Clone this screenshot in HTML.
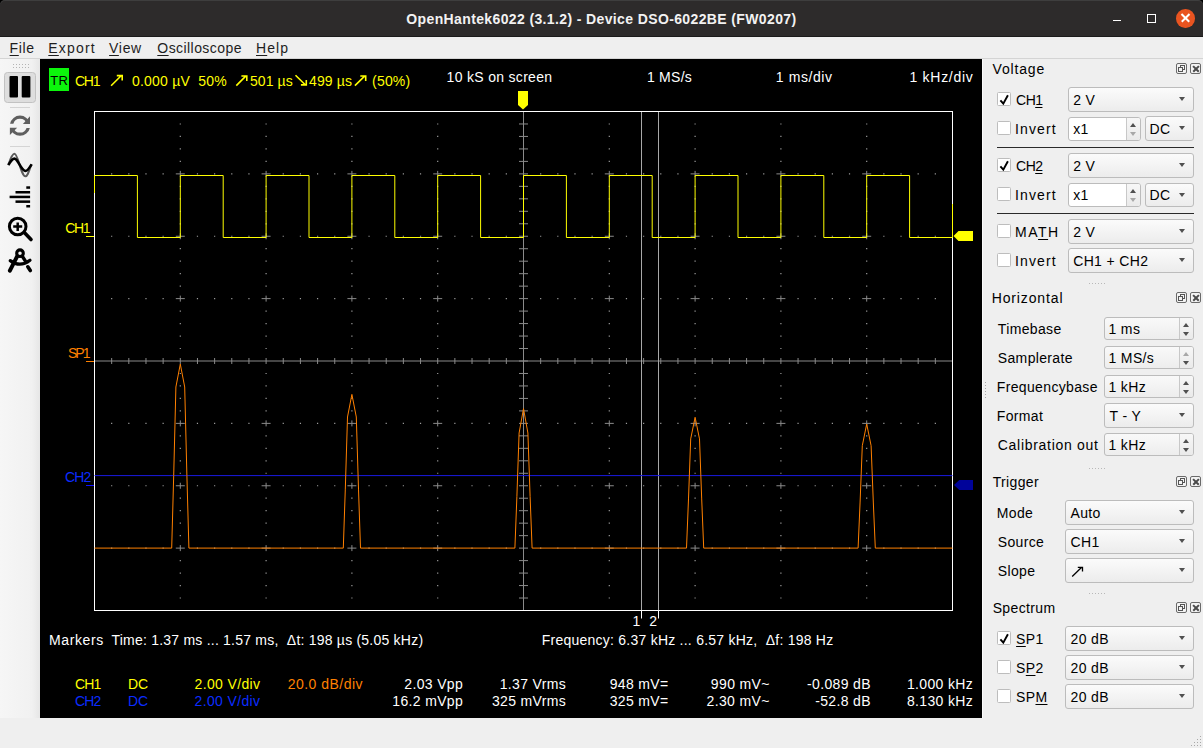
<!DOCTYPE html>
<html><head><meta charset="utf-8"><style>
*{box-sizing:border-box}
html,body{margin:0;padding:0}
body{width:1203px;height:748px;position:relative;overflow:hidden;background:linear-gradient(#000 0 8px,#efefef 8px);font-family:"Liberation Sans",sans-serif}
.t{position:absolute;white-space:pre;}
.t u{text-decoration:underline;text-underline-offset:2px;text-decoration-thickness:1px}
#title{position:absolute;left:0;top:0;width:1203px;height:37px;background:#2d2b2b;border-bottom:1px solid #1b1b1b;border-radius:5px 5px 0 0;box-shadow:inset 0 1px 0 #3e3e3e}
#menu{position:absolute;left:0;top:37px;width:1203px;height:22px;background:#efefef;border-bottom:1px solid #d4d4d4}
#tool{position:absolute;left:0;top:59px;width:40px;height:659px;background:linear-gradient(90deg,#f6f6f6,#f1f1f1 80%,#e6e6e6)}
#scope{position:absolute;left:40px;top:59px;width:942px;height:659px;background:#000}
.scope{position:absolute;left:40px;top:59px}
.icons{position:absolute;left:0;top:59px}
#panel{position:absolute;left:982px;top:59px;width:221px;height:659px;background:#efefef}
.cb{position:absolute;border:1px solid #bcbcbc;border-radius:3px;background:linear-gradient(#fbfbfb,#ececec)}
.arr{position:absolute;width:0;height:0;border-left:3.5px solid transparent;border-right:3.5px solid transparent;border-top:4.5px solid #505050}
.sp{position:absolute;border:1px solid #bcbcbc;border-radius:3px;background:linear-gradient(#f9f9f9,#ededed)}
.sp.white{background:#fff}
.sp .btn{position:absolute;top:0;width:14px;border-left:1px solid #c8c8c8;background:linear-gradient(#f7f7f7,#eaeaea);border-radius:0 2px 2px 0}
.sp .btn i{position:absolute;left:3px;width:0;height:0;border-left:3.5px solid transparent;border-right:3.5px solid transparent}
.sp .btn i.up{border-bottom:4px solid #505050}
.sp .btn i.dn{border-top:4px solid #505050}
.sp .btn i.dis.up{border-bottom-color:#a8a8a8}
.sp .btn i.dis.dn{border-top-color:#a8a8a8}
.ck{position:absolute;width:14px;height:14px;border:1px solid #bdbdbd;border-radius:1.5px;background:#fff}
.ck b{position:absolute;left:1px;top:-3px;font-size:14px;font-weight:bold;color:#000;line-height:18px}
.hl{position:absolute;left:997px;width:197px;height:1px;background:#2a2a2a}
.db{position:absolute;width:11px;height:11px;border:1px solid #6a6a6a;border-radius:2px;background:#f3f3f3}
.db i{position:absolute}
.db .fl1{left:3px;top:1px;width:5px;height:5px;border:1px solid #555}
.db .fl2{left:1px;top:3px;width:5px;height:5px;border:1px solid #555;background:#f3f3f3}
.db .x1,.db .x2{left:0.5px;top:3.8px;width:8px;height:1.8px;background:#4a4a4a;transform:rotate(45deg)}
.db .x2{transform:rotate(-45deg)}
.grip{position:absolute;height:1px;background:repeating-linear-gradient(90deg,#b8b8b8 0 1px,transparent 1px 3px)}
#winbtn .min{position:absolute;left:1113px;top:20px;width:8px;height:1px;background:#fff}
#winbtn .max{position:absolute;left:1147px;top:14px;width:8.5px;height:8.5px;border:1px solid #fff}
#winbtn .cls{position:absolute;left:1176px;top:9px;width:18.5px;height:18.5px;border-radius:50%;background:#e95420}
#winbtn .cls i{position:absolute;left:3.7px;top:8.4px;width:11px;height:1.6px;background:#fff;transform:rotate(45deg)}
#winbtn .cls i+i{transform:rotate(-45deg)}
</style></head><body>
<div id="title"></div>
<div id="winbtn"><div class="min"></div><div class="max"></div><div class="cls"><i></i><i></i></div></div>
<div id="menu"></div>
<div id="tool"></div>
<svg class="icons" width="40" height="659" viewBox="0 59 40 659">
<g fill="#b4b4b4"><rect x="13" y="64" width="1" height="1"/><rect x="16" y="64" width="1" height="1"/><rect x="19" y="64" width="1" height="1"/><rect x="22" y="64" width="1" height="1"/><rect x="25" y="64" width="1" height="1"/><rect x="28" y="64" width="1" height="1"/>
<rect x="13" y="67" width="1" height="1"/><rect x="16" y="67" width="1" height="1"/><rect x="19" y="67" width="1" height="1"/><rect x="22" y="67" width="1" height="1"/><rect x="25" y="67" width="1" height="1"/><rect x="28" y="67" width="1" height="1"/></g>
<rect x="4.5" y="72.5" width="31" height="30" rx="3" fill="#dedede" stroke="#c2c2c2"/>
<rect x="9.5" y="76" width="8.5" height="21.5" rx="1" fill="#000"/>
<rect x="21.7" y="76" width="8.7" height="21.5" rx="1" fill="#000"/>
<rect x="10" y="107" width="20" height="1" fill="#d4d4d4"/>
<g fill="#5f5f5f">
<path d="M10.08 123.8A10.1 10.1 0 0 1 29.92 123.8L26.63 123.8A6.9 6.9 0 0 0 13.37 123.8Z"/>
<path d="M22.9 123.9L30 123.9L30 116.2Z"/>
<path d="M29.86 127.9A10.1 10.1 0 0 1 10.14 127.9L13.46 127.9A6.9 6.9 0 0 0 26.54 127.9Z"/>
<path d="M17.1 127.8L9.9 127.8L9.9 134.9Z"/>
</g>
<rect x="10" y="146" width="20" height="1" fill="#d4d4d4"/>
<path d="M8.5 164.5C11 157 12.5 153.8 14.5 153.8C18 153.8 21 176.3 25.5 176.3C27.5 176.3 29 171 31.5 164" fill="none" stroke="#5a5a5a" stroke-width="2.1"/>
<path d="M8.3 165.2C11 160.5 12.5 158.6 14.5 158.6C18 158.6 21 171 25.5 171C27.5 171 29 168.5 31.6 164.4" fill="none" stroke="#000" stroke-width="2.6"/>
<g fill="#000"><rect x="26.3" y="186.3" width="3.8" height="2.5"/><rect x="15.5" y="191" width="14.6" height="2.5"/><rect x="9.6" y="195.7" width="20.5" height="2.5"/><rect x="15.5" y="200.4" width="14.6" height="2.5"/><rect x="26.3" y="205" width="3.8" height="2.5"/></g>
<circle cx="17.7" cy="226.5" r="8.3" fill="none" stroke="#000" stroke-width="3"/>
<path d="M13.2 226.6H22.2M17.7 222.4V231" stroke="#000" stroke-width="2.5"/>
<path d="M24.3 232.6L31 239.5" stroke="#000" stroke-width="3.6" stroke-linecap="round"/>
<circle cx="20" cy="253.2" r="3.3" fill="none" stroke="#000" stroke-width="3.1"/>
<path d="M17 256.6L9.9 270.6" stroke="#000" stroke-width="4" stroke-linecap="round"/>
<path d="M22.4 256.4L25.4 261.2" stroke="#000" stroke-width="3.4" stroke-linecap="round"/>
<path d="M27.8 266.8L30.3 270.6" stroke="#000" stroke-width="3.6" stroke-linecap="round"/>
<path d="M10.2 260.6Q20 268 30 260.3" fill="none" stroke="#000" stroke-width="3.2" stroke-linecap="round"/>
</svg>
<div id="scope"></div>
<svg class="scope" width="942" height="659" viewBox="40 59 942 659"><path d="M179.70 123.38h1.2v1.2h-1.2zM179.70 135.85h1.2v1.2h-1.2zM179.70 148.33h1.2v1.2h-1.2zM179.70 160.80h1.2v1.2h-1.2zM179.70 185.75h1.2v1.2h-1.2zM179.70 198.22h1.2v1.2h-1.2zM179.70 210.70h1.2v1.2h-1.2zM179.70 223.18h1.2v1.2h-1.2zM179.70 248.12h1.2v1.2h-1.2zM179.70 260.60h1.2v1.2h-1.2zM179.70 273.07h1.2v1.2h-1.2zM179.70 285.55h1.2v1.2h-1.2zM179.70 310.50h1.2v1.2h-1.2zM179.70 322.97h1.2v1.2h-1.2zM179.70 335.45h1.2v1.2h-1.2zM179.70 347.92h1.2v1.2h-1.2zM179.70 372.88h1.2v1.2h-1.2zM179.70 385.35h1.2v1.2h-1.2zM179.70 397.82h1.2v1.2h-1.2zM179.70 410.30h1.2v1.2h-1.2zM179.70 435.25h1.2v1.2h-1.2zM179.70 447.72h1.2v1.2h-1.2zM179.70 460.20h1.2v1.2h-1.2zM179.70 472.67h1.2v1.2h-1.2zM179.70 497.62h1.2v1.2h-1.2zM179.70 510.10h1.2v1.2h-1.2zM179.70 522.57h1.2v1.2h-1.2zM179.70 535.05h1.2v1.2h-1.2zM179.70 560.00h1.2v1.2h-1.2zM179.70 572.48h1.2v1.2h-1.2zM179.70 584.95h1.2v1.2h-1.2zM179.70 597.42h1.2v1.2h-1.2zM265.50 123.38h1.2v1.2h-1.2zM265.50 135.85h1.2v1.2h-1.2zM265.50 148.33h1.2v1.2h-1.2zM265.50 160.80h1.2v1.2h-1.2zM265.50 185.75h1.2v1.2h-1.2zM265.50 198.22h1.2v1.2h-1.2zM265.50 210.70h1.2v1.2h-1.2zM265.50 223.18h1.2v1.2h-1.2zM265.50 248.12h1.2v1.2h-1.2zM265.50 260.60h1.2v1.2h-1.2zM265.50 273.07h1.2v1.2h-1.2zM265.50 285.55h1.2v1.2h-1.2zM265.50 310.50h1.2v1.2h-1.2zM265.50 322.97h1.2v1.2h-1.2zM265.50 335.45h1.2v1.2h-1.2zM265.50 347.92h1.2v1.2h-1.2zM265.50 372.88h1.2v1.2h-1.2zM265.50 385.35h1.2v1.2h-1.2zM265.50 397.82h1.2v1.2h-1.2zM265.50 410.30h1.2v1.2h-1.2zM265.50 435.25h1.2v1.2h-1.2zM265.50 447.72h1.2v1.2h-1.2zM265.50 460.20h1.2v1.2h-1.2zM265.50 472.67h1.2v1.2h-1.2zM265.50 497.62h1.2v1.2h-1.2zM265.50 510.10h1.2v1.2h-1.2zM265.50 522.57h1.2v1.2h-1.2zM265.50 535.05h1.2v1.2h-1.2zM265.50 560.00h1.2v1.2h-1.2zM265.50 572.48h1.2v1.2h-1.2zM265.50 584.95h1.2v1.2h-1.2zM265.50 597.42h1.2v1.2h-1.2zM351.30 123.38h1.2v1.2h-1.2zM351.30 135.85h1.2v1.2h-1.2zM351.30 148.33h1.2v1.2h-1.2zM351.30 160.80h1.2v1.2h-1.2zM351.30 185.75h1.2v1.2h-1.2zM351.30 198.22h1.2v1.2h-1.2zM351.30 210.70h1.2v1.2h-1.2zM351.30 223.18h1.2v1.2h-1.2zM351.30 248.12h1.2v1.2h-1.2zM351.30 260.60h1.2v1.2h-1.2zM351.30 273.07h1.2v1.2h-1.2zM351.30 285.55h1.2v1.2h-1.2zM351.30 310.50h1.2v1.2h-1.2zM351.30 322.97h1.2v1.2h-1.2zM351.30 335.45h1.2v1.2h-1.2zM351.30 347.92h1.2v1.2h-1.2zM351.30 372.88h1.2v1.2h-1.2zM351.30 385.35h1.2v1.2h-1.2zM351.30 397.82h1.2v1.2h-1.2zM351.30 410.30h1.2v1.2h-1.2zM351.30 435.25h1.2v1.2h-1.2zM351.30 447.72h1.2v1.2h-1.2zM351.30 460.20h1.2v1.2h-1.2zM351.30 472.67h1.2v1.2h-1.2zM351.30 497.62h1.2v1.2h-1.2zM351.30 510.10h1.2v1.2h-1.2zM351.30 522.57h1.2v1.2h-1.2zM351.30 535.05h1.2v1.2h-1.2zM351.30 560.00h1.2v1.2h-1.2zM351.30 572.48h1.2v1.2h-1.2zM351.30 584.95h1.2v1.2h-1.2zM351.30 597.42h1.2v1.2h-1.2zM437.10 123.38h1.2v1.2h-1.2zM437.10 135.85h1.2v1.2h-1.2zM437.10 148.33h1.2v1.2h-1.2zM437.10 160.80h1.2v1.2h-1.2zM437.10 185.75h1.2v1.2h-1.2zM437.10 198.22h1.2v1.2h-1.2zM437.10 210.70h1.2v1.2h-1.2zM437.10 223.18h1.2v1.2h-1.2zM437.10 248.12h1.2v1.2h-1.2zM437.10 260.60h1.2v1.2h-1.2zM437.10 273.07h1.2v1.2h-1.2zM437.10 285.55h1.2v1.2h-1.2zM437.10 310.50h1.2v1.2h-1.2zM437.10 322.97h1.2v1.2h-1.2zM437.10 335.45h1.2v1.2h-1.2zM437.10 347.92h1.2v1.2h-1.2zM437.10 372.88h1.2v1.2h-1.2zM437.10 385.35h1.2v1.2h-1.2zM437.10 397.82h1.2v1.2h-1.2zM437.10 410.30h1.2v1.2h-1.2zM437.10 435.25h1.2v1.2h-1.2zM437.10 447.72h1.2v1.2h-1.2zM437.10 460.20h1.2v1.2h-1.2zM437.10 472.67h1.2v1.2h-1.2zM437.10 497.62h1.2v1.2h-1.2zM437.10 510.10h1.2v1.2h-1.2zM437.10 522.57h1.2v1.2h-1.2zM437.10 535.05h1.2v1.2h-1.2zM437.10 560.00h1.2v1.2h-1.2zM437.10 572.48h1.2v1.2h-1.2zM437.10 584.95h1.2v1.2h-1.2zM437.10 597.42h1.2v1.2h-1.2zM608.70 123.38h1.2v1.2h-1.2zM608.70 135.85h1.2v1.2h-1.2zM608.70 148.33h1.2v1.2h-1.2zM608.70 160.80h1.2v1.2h-1.2zM608.70 185.75h1.2v1.2h-1.2zM608.70 198.22h1.2v1.2h-1.2zM608.70 210.70h1.2v1.2h-1.2zM608.70 223.18h1.2v1.2h-1.2zM608.70 248.12h1.2v1.2h-1.2zM608.70 260.60h1.2v1.2h-1.2zM608.70 273.07h1.2v1.2h-1.2zM608.70 285.55h1.2v1.2h-1.2zM608.70 310.50h1.2v1.2h-1.2zM608.70 322.97h1.2v1.2h-1.2zM608.70 335.45h1.2v1.2h-1.2zM608.70 347.92h1.2v1.2h-1.2zM608.70 372.88h1.2v1.2h-1.2zM608.70 385.35h1.2v1.2h-1.2zM608.70 397.82h1.2v1.2h-1.2zM608.70 410.30h1.2v1.2h-1.2zM608.70 435.25h1.2v1.2h-1.2zM608.70 447.72h1.2v1.2h-1.2zM608.70 460.20h1.2v1.2h-1.2zM608.70 472.67h1.2v1.2h-1.2zM608.70 497.62h1.2v1.2h-1.2zM608.70 510.10h1.2v1.2h-1.2zM608.70 522.57h1.2v1.2h-1.2zM608.70 535.05h1.2v1.2h-1.2zM608.70 560.00h1.2v1.2h-1.2zM608.70 572.48h1.2v1.2h-1.2zM608.70 584.95h1.2v1.2h-1.2zM608.70 597.42h1.2v1.2h-1.2zM694.50 123.38h1.2v1.2h-1.2zM694.50 135.85h1.2v1.2h-1.2zM694.50 148.33h1.2v1.2h-1.2zM694.50 160.80h1.2v1.2h-1.2zM694.50 185.75h1.2v1.2h-1.2zM694.50 198.22h1.2v1.2h-1.2zM694.50 210.70h1.2v1.2h-1.2zM694.50 223.18h1.2v1.2h-1.2zM694.50 248.12h1.2v1.2h-1.2zM694.50 260.60h1.2v1.2h-1.2zM694.50 273.07h1.2v1.2h-1.2zM694.50 285.55h1.2v1.2h-1.2zM694.50 310.50h1.2v1.2h-1.2zM694.50 322.97h1.2v1.2h-1.2zM694.50 335.45h1.2v1.2h-1.2zM694.50 347.92h1.2v1.2h-1.2zM694.50 372.88h1.2v1.2h-1.2zM694.50 385.35h1.2v1.2h-1.2zM694.50 397.82h1.2v1.2h-1.2zM694.50 410.30h1.2v1.2h-1.2zM694.50 435.25h1.2v1.2h-1.2zM694.50 447.72h1.2v1.2h-1.2zM694.50 460.20h1.2v1.2h-1.2zM694.50 472.67h1.2v1.2h-1.2zM694.50 497.62h1.2v1.2h-1.2zM694.50 510.10h1.2v1.2h-1.2zM694.50 522.57h1.2v1.2h-1.2zM694.50 535.05h1.2v1.2h-1.2zM694.50 560.00h1.2v1.2h-1.2zM694.50 572.48h1.2v1.2h-1.2zM694.50 584.95h1.2v1.2h-1.2zM694.50 597.42h1.2v1.2h-1.2zM780.30 123.38h1.2v1.2h-1.2zM780.30 135.85h1.2v1.2h-1.2zM780.30 148.33h1.2v1.2h-1.2zM780.30 160.80h1.2v1.2h-1.2zM780.30 185.75h1.2v1.2h-1.2zM780.30 198.22h1.2v1.2h-1.2zM780.30 210.70h1.2v1.2h-1.2zM780.30 223.18h1.2v1.2h-1.2zM780.30 248.12h1.2v1.2h-1.2zM780.30 260.60h1.2v1.2h-1.2zM780.30 273.07h1.2v1.2h-1.2zM780.30 285.55h1.2v1.2h-1.2zM780.30 310.50h1.2v1.2h-1.2zM780.30 322.97h1.2v1.2h-1.2zM780.30 335.45h1.2v1.2h-1.2zM780.30 347.92h1.2v1.2h-1.2zM780.30 372.88h1.2v1.2h-1.2zM780.30 385.35h1.2v1.2h-1.2zM780.30 397.82h1.2v1.2h-1.2zM780.30 410.30h1.2v1.2h-1.2zM780.30 435.25h1.2v1.2h-1.2zM780.30 447.72h1.2v1.2h-1.2zM780.30 460.20h1.2v1.2h-1.2zM780.30 472.67h1.2v1.2h-1.2zM780.30 497.62h1.2v1.2h-1.2zM780.30 510.10h1.2v1.2h-1.2zM780.30 522.57h1.2v1.2h-1.2zM780.30 535.05h1.2v1.2h-1.2zM780.30 560.00h1.2v1.2h-1.2zM780.30 572.48h1.2v1.2h-1.2zM780.30 584.95h1.2v1.2h-1.2zM780.30 597.42h1.2v1.2h-1.2zM866.10 123.38h1.2v1.2h-1.2zM866.10 135.85h1.2v1.2h-1.2zM866.10 148.33h1.2v1.2h-1.2zM866.10 160.80h1.2v1.2h-1.2zM866.10 185.75h1.2v1.2h-1.2zM866.10 198.22h1.2v1.2h-1.2zM866.10 210.70h1.2v1.2h-1.2zM866.10 223.18h1.2v1.2h-1.2zM866.10 248.12h1.2v1.2h-1.2zM866.10 260.60h1.2v1.2h-1.2zM866.10 273.07h1.2v1.2h-1.2zM866.10 285.55h1.2v1.2h-1.2zM866.10 310.50h1.2v1.2h-1.2zM866.10 322.97h1.2v1.2h-1.2zM866.10 335.45h1.2v1.2h-1.2zM866.10 347.92h1.2v1.2h-1.2zM866.10 372.88h1.2v1.2h-1.2zM866.10 385.35h1.2v1.2h-1.2zM866.10 397.82h1.2v1.2h-1.2zM866.10 410.30h1.2v1.2h-1.2zM866.10 435.25h1.2v1.2h-1.2zM866.10 447.72h1.2v1.2h-1.2zM866.10 460.20h1.2v1.2h-1.2zM866.10 472.67h1.2v1.2h-1.2zM866.10 497.62h1.2v1.2h-1.2zM866.10 510.10h1.2v1.2h-1.2zM866.10 522.57h1.2v1.2h-1.2zM866.10 535.05h1.2v1.2h-1.2zM866.10 560.00h1.2v1.2h-1.2zM866.10 572.48h1.2v1.2h-1.2zM866.10 584.95h1.2v1.2h-1.2zM866.10 597.42h1.2v1.2h-1.2zM111.06 173.28h1.2v1.2h-1.2zM128.22 173.28h1.2v1.2h-1.2zM145.38 173.28h1.2v1.2h-1.2zM162.54 173.28h1.2v1.2h-1.2zM196.86 173.28h1.2v1.2h-1.2zM214.02 173.28h1.2v1.2h-1.2zM231.18 173.28h1.2v1.2h-1.2zM248.34 173.28h1.2v1.2h-1.2zM282.66 173.28h1.2v1.2h-1.2zM299.82 173.28h1.2v1.2h-1.2zM316.98 173.28h1.2v1.2h-1.2zM334.14 173.28h1.2v1.2h-1.2zM368.46 173.28h1.2v1.2h-1.2zM385.62 173.28h1.2v1.2h-1.2zM402.78 173.28h1.2v1.2h-1.2zM419.94 173.28h1.2v1.2h-1.2zM454.26 173.28h1.2v1.2h-1.2zM471.42 173.28h1.2v1.2h-1.2zM488.58 173.28h1.2v1.2h-1.2zM505.74 173.28h1.2v1.2h-1.2zM540.06 173.28h1.2v1.2h-1.2zM557.22 173.28h1.2v1.2h-1.2zM574.38 173.28h1.2v1.2h-1.2zM591.54 173.28h1.2v1.2h-1.2zM625.86 173.28h1.2v1.2h-1.2zM643.02 173.28h1.2v1.2h-1.2zM660.18 173.28h1.2v1.2h-1.2zM677.34 173.28h1.2v1.2h-1.2zM711.66 173.28h1.2v1.2h-1.2zM728.82 173.28h1.2v1.2h-1.2zM745.98 173.28h1.2v1.2h-1.2zM763.14 173.28h1.2v1.2h-1.2zM797.46 173.28h1.2v1.2h-1.2zM814.62 173.28h1.2v1.2h-1.2zM831.78 173.28h1.2v1.2h-1.2zM848.94 173.28h1.2v1.2h-1.2zM883.26 173.28h1.2v1.2h-1.2zM900.42 173.28h1.2v1.2h-1.2zM917.58 173.28h1.2v1.2h-1.2zM934.74 173.28h1.2v1.2h-1.2zM111.06 235.65h1.2v1.2h-1.2zM128.22 235.65h1.2v1.2h-1.2zM145.38 235.65h1.2v1.2h-1.2zM162.54 235.65h1.2v1.2h-1.2zM196.86 235.65h1.2v1.2h-1.2zM214.02 235.65h1.2v1.2h-1.2zM231.18 235.65h1.2v1.2h-1.2zM248.34 235.65h1.2v1.2h-1.2zM282.66 235.65h1.2v1.2h-1.2zM299.82 235.65h1.2v1.2h-1.2zM316.98 235.65h1.2v1.2h-1.2zM334.14 235.65h1.2v1.2h-1.2zM368.46 235.65h1.2v1.2h-1.2zM385.62 235.65h1.2v1.2h-1.2zM402.78 235.65h1.2v1.2h-1.2zM419.94 235.65h1.2v1.2h-1.2zM454.26 235.65h1.2v1.2h-1.2zM471.42 235.65h1.2v1.2h-1.2zM488.58 235.65h1.2v1.2h-1.2zM505.74 235.65h1.2v1.2h-1.2zM540.06 235.65h1.2v1.2h-1.2zM557.22 235.65h1.2v1.2h-1.2zM574.38 235.65h1.2v1.2h-1.2zM591.54 235.65h1.2v1.2h-1.2zM625.86 235.65h1.2v1.2h-1.2zM643.02 235.65h1.2v1.2h-1.2zM660.18 235.65h1.2v1.2h-1.2zM677.34 235.65h1.2v1.2h-1.2zM711.66 235.65h1.2v1.2h-1.2zM728.82 235.65h1.2v1.2h-1.2zM745.98 235.65h1.2v1.2h-1.2zM763.14 235.65h1.2v1.2h-1.2zM797.46 235.65h1.2v1.2h-1.2zM814.62 235.65h1.2v1.2h-1.2zM831.78 235.65h1.2v1.2h-1.2zM848.94 235.65h1.2v1.2h-1.2zM883.26 235.65h1.2v1.2h-1.2zM900.42 235.65h1.2v1.2h-1.2zM917.58 235.65h1.2v1.2h-1.2zM934.74 235.65h1.2v1.2h-1.2zM111.06 298.02h1.2v1.2h-1.2zM128.22 298.02h1.2v1.2h-1.2zM145.38 298.02h1.2v1.2h-1.2zM162.54 298.02h1.2v1.2h-1.2zM196.86 298.02h1.2v1.2h-1.2zM214.02 298.02h1.2v1.2h-1.2zM231.18 298.02h1.2v1.2h-1.2zM248.34 298.02h1.2v1.2h-1.2zM282.66 298.02h1.2v1.2h-1.2zM299.82 298.02h1.2v1.2h-1.2zM316.98 298.02h1.2v1.2h-1.2zM334.14 298.02h1.2v1.2h-1.2zM368.46 298.02h1.2v1.2h-1.2zM385.62 298.02h1.2v1.2h-1.2zM402.78 298.02h1.2v1.2h-1.2zM419.94 298.02h1.2v1.2h-1.2zM454.26 298.02h1.2v1.2h-1.2zM471.42 298.02h1.2v1.2h-1.2zM488.58 298.02h1.2v1.2h-1.2zM505.74 298.02h1.2v1.2h-1.2zM540.06 298.02h1.2v1.2h-1.2zM557.22 298.02h1.2v1.2h-1.2zM574.38 298.02h1.2v1.2h-1.2zM591.54 298.02h1.2v1.2h-1.2zM625.86 298.02h1.2v1.2h-1.2zM643.02 298.02h1.2v1.2h-1.2zM660.18 298.02h1.2v1.2h-1.2zM677.34 298.02h1.2v1.2h-1.2zM711.66 298.02h1.2v1.2h-1.2zM728.82 298.02h1.2v1.2h-1.2zM745.98 298.02h1.2v1.2h-1.2zM763.14 298.02h1.2v1.2h-1.2zM797.46 298.02h1.2v1.2h-1.2zM814.62 298.02h1.2v1.2h-1.2zM831.78 298.02h1.2v1.2h-1.2zM848.94 298.02h1.2v1.2h-1.2zM883.26 298.02h1.2v1.2h-1.2zM900.42 298.02h1.2v1.2h-1.2zM917.58 298.02h1.2v1.2h-1.2zM934.74 298.02h1.2v1.2h-1.2zM111.06 422.77h1.2v1.2h-1.2zM128.22 422.77h1.2v1.2h-1.2zM145.38 422.77h1.2v1.2h-1.2zM162.54 422.77h1.2v1.2h-1.2zM196.86 422.77h1.2v1.2h-1.2zM214.02 422.77h1.2v1.2h-1.2zM231.18 422.77h1.2v1.2h-1.2zM248.34 422.77h1.2v1.2h-1.2zM282.66 422.77h1.2v1.2h-1.2zM299.82 422.77h1.2v1.2h-1.2zM316.98 422.77h1.2v1.2h-1.2zM334.14 422.77h1.2v1.2h-1.2zM368.46 422.77h1.2v1.2h-1.2zM385.62 422.77h1.2v1.2h-1.2zM402.78 422.77h1.2v1.2h-1.2zM419.94 422.77h1.2v1.2h-1.2zM454.26 422.77h1.2v1.2h-1.2zM471.42 422.77h1.2v1.2h-1.2zM488.58 422.77h1.2v1.2h-1.2zM505.74 422.77h1.2v1.2h-1.2zM540.06 422.77h1.2v1.2h-1.2zM557.22 422.77h1.2v1.2h-1.2zM574.38 422.77h1.2v1.2h-1.2zM591.54 422.77h1.2v1.2h-1.2zM625.86 422.77h1.2v1.2h-1.2zM643.02 422.77h1.2v1.2h-1.2zM660.18 422.77h1.2v1.2h-1.2zM677.34 422.77h1.2v1.2h-1.2zM711.66 422.77h1.2v1.2h-1.2zM728.82 422.77h1.2v1.2h-1.2zM745.98 422.77h1.2v1.2h-1.2zM763.14 422.77h1.2v1.2h-1.2zM797.46 422.77h1.2v1.2h-1.2zM814.62 422.77h1.2v1.2h-1.2zM831.78 422.77h1.2v1.2h-1.2zM848.94 422.77h1.2v1.2h-1.2zM883.26 422.77h1.2v1.2h-1.2zM900.42 422.77h1.2v1.2h-1.2zM917.58 422.77h1.2v1.2h-1.2zM934.74 422.77h1.2v1.2h-1.2zM111.06 485.15h1.2v1.2h-1.2zM128.22 485.15h1.2v1.2h-1.2zM145.38 485.15h1.2v1.2h-1.2zM162.54 485.15h1.2v1.2h-1.2zM196.86 485.15h1.2v1.2h-1.2zM214.02 485.15h1.2v1.2h-1.2zM231.18 485.15h1.2v1.2h-1.2zM248.34 485.15h1.2v1.2h-1.2zM282.66 485.15h1.2v1.2h-1.2zM299.82 485.15h1.2v1.2h-1.2zM316.98 485.15h1.2v1.2h-1.2zM334.14 485.15h1.2v1.2h-1.2zM368.46 485.15h1.2v1.2h-1.2zM385.62 485.15h1.2v1.2h-1.2zM402.78 485.15h1.2v1.2h-1.2zM419.94 485.15h1.2v1.2h-1.2zM454.26 485.15h1.2v1.2h-1.2zM471.42 485.15h1.2v1.2h-1.2zM488.58 485.15h1.2v1.2h-1.2zM505.74 485.15h1.2v1.2h-1.2zM540.06 485.15h1.2v1.2h-1.2zM557.22 485.15h1.2v1.2h-1.2zM574.38 485.15h1.2v1.2h-1.2zM591.54 485.15h1.2v1.2h-1.2zM625.86 485.15h1.2v1.2h-1.2zM643.02 485.15h1.2v1.2h-1.2zM660.18 485.15h1.2v1.2h-1.2zM677.34 485.15h1.2v1.2h-1.2zM711.66 485.15h1.2v1.2h-1.2zM728.82 485.15h1.2v1.2h-1.2zM745.98 485.15h1.2v1.2h-1.2zM763.14 485.15h1.2v1.2h-1.2zM797.46 485.15h1.2v1.2h-1.2zM814.62 485.15h1.2v1.2h-1.2zM831.78 485.15h1.2v1.2h-1.2zM848.94 485.15h1.2v1.2h-1.2zM883.26 485.15h1.2v1.2h-1.2zM900.42 485.15h1.2v1.2h-1.2zM917.58 485.15h1.2v1.2h-1.2zM934.74 485.15h1.2v1.2h-1.2zM111.06 547.52h1.2v1.2h-1.2zM128.22 547.52h1.2v1.2h-1.2zM145.38 547.52h1.2v1.2h-1.2zM162.54 547.52h1.2v1.2h-1.2zM196.86 547.52h1.2v1.2h-1.2zM214.02 547.52h1.2v1.2h-1.2zM231.18 547.52h1.2v1.2h-1.2zM248.34 547.52h1.2v1.2h-1.2zM282.66 547.52h1.2v1.2h-1.2zM299.82 547.52h1.2v1.2h-1.2zM316.98 547.52h1.2v1.2h-1.2zM334.14 547.52h1.2v1.2h-1.2zM368.46 547.52h1.2v1.2h-1.2zM385.62 547.52h1.2v1.2h-1.2zM402.78 547.52h1.2v1.2h-1.2zM419.94 547.52h1.2v1.2h-1.2zM454.26 547.52h1.2v1.2h-1.2zM471.42 547.52h1.2v1.2h-1.2zM488.58 547.52h1.2v1.2h-1.2zM505.74 547.52h1.2v1.2h-1.2zM540.06 547.52h1.2v1.2h-1.2zM557.22 547.52h1.2v1.2h-1.2zM574.38 547.52h1.2v1.2h-1.2zM591.54 547.52h1.2v1.2h-1.2zM625.86 547.52h1.2v1.2h-1.2zM643.02 547.52h1.2v1.2h-1.2zM660.18 547.52h1.2v1.2h-1.2zM677.34 547.52h1.2v1.2h-1.2zM711.66 547.52h1.2v1.2h-1.2zM728.82 547.52h1.2v1.2h-1.2zM745.98 547.52h1.2v1.2h-1.2zM763.14 547.52h1.2v1.2h-1.2zM797.46 547.52h1.2v1.2h-1.2zM814.62 547.52h1.2v1.2h-1.2zM831.78 547.52h1.2v1.2h-1.2zM848.94 547.52h1.2v1.2h-1.2zM883.26 547.52h1.2v1.2h-1.2zM900.42 547.52h1.2v1.2h-1.2zM917.58 547.52h1.2v1.2h-1.2zM934.74 547.52h1.2v1.2h-1.2z" fill="#9a9a9a"/><path d="M175.80 173.88H184.80M180.30 170.88V176.88M175.80 236.25H184.80M180.30 233.25V239.25M175.80 298.62H184.80M180.30 295.62V301.62M175.80 423.38H184.80M180.30 420.38V426.38M175.80 485.75H184.80M180.30 482.75V488.75M175.80 548.12H184.80M180.30 545.12V551.12M261.60 173.88H270.60M266.10 170.88V176.88M261.60 236.25H270.60M266.10 233.25V239.25M261.60 298.62H270.60M266.10 295.62V301.62M261.60 423.38H270.60M266.10 420.38V426.38M261.60 485.75H270.60M266.10 482.75V488.75M261.60 548.12H270.60M266.10 545.12V551.12M347.40 173.88H356.40M351.90 170.88V176.88M347.40 236.25H356.40M351.90 233.25V239.25M347.40 298.62H356.40M351.90 295.62V301.62M347.40 423.38H356.40M351.90 420.38V426.38M347.40 485.75H356.40M351.90 482.75V488.75M347.40 548.12H356.40M351.90 545.12V551.12M433.20 173.88H442.20M437.70 170.88V176.88M433.20 236.25H442.20M437.70 233.25V239.25M433.20 298.62H442.20M437.70 295.62V301.62M433.20 423.38H442.20M437.70 420.38V426.38M433.20 485.75H442.20M437.70 482.75V488.75M433.20 548.12H442.20M437.70 545.12V551.12M604.80 173.88H613.80M609.30 170.88V176.88M604.80 236.25H613.80M609.30 233.25V239.25M604.80 298.62H613.80M609.30 295.62V301.62M604.80 423.38H613.80M609.30 420.38V426.38M604.80 485.75H613.80M609.30 482.75V488.75M604.80 548.12H613.80M609.30 545.12V551.12M690.60 173.88H699.60M695.10 170.88V176.88M690.60 236.25H699.60M695.10 233.25V239.25M690.60 298.62H699.60M695.10 295.62V301.62M690.60 423.38H699.60M695.10 420.38V426.38M690.60 485.75H699.60M695.10 482.75V488.75M690.60 548.12H699.60M695.10 545.12V551.12M776.40 173.88H785.40M780.90 170.88V176.88M776.40 236.25H785.40M780.90 233.25V239.25M776.40 298.62H785.40M780.90 295.62V301.62M776.40 423.38H785.40M780.90 420.38V426.38M776.40 485.75H785.40M780.90 482.75V488.75M776.40 548.12H785.40M780.90 545.12V551.12M862.20 173.88H871.20M866.70 170.88V176.88M862.20 236.25H871.20M866.70 233.25V239.25M862.20 298.62H871.20M866.70 295.62V301.62M862.20 423.38H871.20M866.70 420.38V426.38M862.20 485.75H871.20M866.70 482.75V488.75M862.20 548.12H871.20M866.70 545.12V551.12" stroke="#8a8a8a" stroke-width="1" fill="none"/><path d="M523.50 111.5V610.5M94.5 361.00H952.5M519.00 123.97H528.00M519.00 136.45H528.00M519.00 148.93H528.00M519.00 161.40H528.00M519.00 173.88H528.00M519.00 186.35H528.00M519.00 198.82H528.00M519.00 211.30H528.00M519.00 223.78H528.00M519.00 236.25H528.00M519.00 248.72H528.00M519.00 261.20H528.00M519.00 273.68H528.00M519.00 286.15H528.00M519.00 298.62H528.00M519.00 311.10H528.00M519.00 323.57H528.00M519.00 336.05H528.00M519.00 348.52H528.00M519.00 361.00H528.00M519.00 373.48H528.00M519.00 385.95H528.00M519.00 398.43H528.00M519.00 410.90H528.00M519.00 423.38H528.00M519.00 435.85H528.00M519.00 448.32H528.00M519.00 460.80H528.00M519.00 473.27H528.00M519.00 485.75H528.00M519.00 498.23H528.00M519.00 510.70H528.00M519.00 523.17H528.00M519.00 535.65H528.00M519.00 548.12H528.00M519.00 560.60H528.00M519.00 573.08H528.00M519.00 585.55H528.00M519.00 598.02H528.00M111.66 358.00V364.00M128.82 358.00V364.00M145.98 358.00V364.00M163.14 358.00V364.00M180.30 358.00V364.00M197.46 358.00V364.00M214.62 358.00V364.00M231.78 358.00V364.00M248.94 358.00V364.00M266.10 358.00V364.00M283.26 358.00V364.00M300.42 358.00V364.00M317.58 358.00V364.00M334.74 358.00V364.00M351.90 358.00V364.00M369.06 358.00V364.00M386.22 358.00V364.00M403.38 358.00V364.00M420.54 358.00V364.00M437.70 358.00V364.00M454.86 358.00V364.00M472.02 358.00V364.00M489.18 358.00V364.00M506.34 358.00V364.00M523.50 358.00V364.00M540.66 358.00V364.00M557.82 358.00V364.00M574.98 358.00V364.00M592.14 358.00V364.00M609.30 358.00V364.00M626.46 358.00V364.00M643.62 358.00V364.00M660.78 358.00V364.00M677.94 358.00V364.00M695.10 358.00V364.00M712.26 358.00V364.00M729.42 358.00V364.00M746.58 358.00V364.00M763.74 358.00V364.00M780.90 358.00V364.00M798.06 358.00V364.00M815.22 358.00V364.00M832.38 358.00V364.00M849.54 358.00V364.00M866.70 358.00V364.00M883.86 358.00V364.00M901.02 358.00V364.00M918.18 358.00V364.00M935.34 358.00V364.00" stroke="#8a8a8a" stroke-width="1" fill="none"/><line x1="641.50" y1="111.50" x2="641.50" y2="610.50" stroke="#a8a8a8" stroke-width="1" /><line x1="658.50" y1="111.50" x2="658.50" y2="610.50" stroke="#a8a8a8" stroke-width="1" /><line x1="641.50" y1="610.50" x2="641.50" y2="618.50" stroke="#ffffff" stroke-width="1" /><line x1="658.50" y1="610.50" x2="658.50" y2="618.50" stroke="#ffffff" stroke-width="1" /><rect x="94.5" y="111.5" width="858.0" height="499.0" fill="none" stroke="#ffffff" stroke-width="1"/><line x1="94.50" y1="475.60" x2="952.50" y2="475.60" stroke="#1a1ae0" stroke-width="1" /><path d="M94.5 193V175.5H137.40V237.5H180.30V175.5H223.20V237.5H266.10V175.5H309.00V237.5H351.90V175.5H394.80V237.5H437.70V175.5H480.60V237.5H523.50V175.5H566.40V237.5H609.30V175.5H652.20V237.5H695.10V175.5H738.00V237.5H780.90V175.5H823.80V237.5H866.70V175.5H909.60V237.5H952.5" stroke="#ffff00" stroke-width="1" fill="none"/><path d="M952.5 204V237.5" stroke="#ffff00" stroke-width="1" fill="none"/><path d="M94.5 548.1L171.70 548.1L173.70 475.61L175.90 387.00L180.30 364.10L184.70 387.00L186.90 475.61L188.90 548.1L343.30 548.1L345.30 489.11L347.50 417.00L351.90 394.40L356.30 417.00L358.50 489.11L360.50 548.1L514.90 548.1L516.90 496.31L519.10 433.00L523.50 408.60L527.90 433.00L530.10 496.31L532.10 548.1L686.50 548.1L688.50 498.96L690.70 438.90L695.10 417.30L699.50 438.90L701.70 498.96L703.70 548.1L858.10 548.1L860.10 502.02L862.30 445.70L866.70 424.00L871.10 445.70L873.30 502.02L875.30 548.1L952.5 548.1" stroke="#ff8000" stroke-width="1" fill="none" stroke-linejoin="round"/><line x1="86.00" y1="236.50" x2="94.00" y2="236.50" stroke="#ffff00" stroke-width="1" /><line x1="86.00" y1="361.50" x2="94.00" y2="361.50" stroke="#ff8000" stroke-width="1" /><line x1="86.00" y1="485.50" x2="94.00" y2="485.50" stroke="#1010ff" stroke-width="1" /><polygon points="953.5,236 958.5,231 973,231 973,241 958.5,241" fill="#ffff00"/><polygon points="954,485 959.3,480 973,480 973,490 959.3,490" fill="#00039a"/><polygon points="518,91 528,91 528,105 523,109.5 518,105" fill="#ffff00"/><rect x="49" y="68" width="20" height="23" fill="#0cf50c"/></svg>
<div id="panel"></div>
<div class="db" style="left:1176px;top:63px"><i class="fl1"></i><i class="fl2"></i></div>
<div class="db" style="left:1190px;top:63px"><i class="x1"></i><i class="x2"></i></div>
<div class="ck" style="left:997px;top:92px"><svg width="14" height="14" style="position:absolute;left:-1px;top:-1px"><path d="M3.4 8.3L6.3 11.6L10.9 3.2" stroke="#000" stroke-width="1.9" fill="none"/></svg></div>
<div class="cb" style="left:1068px;top:87px;width:126px;height:25px"><i class="arr" style="left:109.5px;top:9.3px"></i></div>
<div class="ck" style="left:997px;top:121px"></div>
<div class="sp white" style="left:1068px;top:117px;width:73px;height:24px"><div class="btn" style="left:57px;height:22px"><i class="up" style="top:5.0px"></i><i class="dn dis" style="top:14.0px"></i></div></div>
<div class="cb" style="left:1145px;top:116px;width:49px;height:25px"><i class="arr" style="left:32.5px;top:9.3px"></i></div>
<div class="hl" style="top:147px"></div>
<div class="ck" style="left:997px;top:158px"><svg width="14" height="14" style="position:absolute;left:-1px;top:-1px"><path d="M3.4 8.3L6.3 11.6L10.9 3.2" stroke="#000" stroke-width="1.9" fill="none"/></svg></div>
<div class="cb" style="left:1068px;top:153px;width:126px;height:25px"><i class="arr" style="left:109.5px;top:9.3px"></i></div>
<div class="ck" style="left:997px;top:187px"></div>
<div class="sp white" style="left:1068px;top:183px;width:73px;height:24px"><div class="btn" style="left:57px;height:22px"><i class="up" style="top:5.0px"></i><i class="dn dis" style="top:14.0px"></i></div></div>
<div class="cb" style="left:1145px;top:183px;width:49px;height:24px"><i class="arr" style="left:32.5px;top:8.8px"></i></div>
<div class="hl" style="top:213px"></div>
<div class="ck" style="left:997px;top:224px"></div>
<div class="cb" style="left:1068px;top:219px;width:126px;height:25px"><i class="arr" style="left:109.5px;top:9.3px"></i></div>
<div class="ck" style="left:997px;top:253px"></div>
<div class="cb" style="left:1068px;top:248px;width:126px;height:25px"><i class="arr" style="left:109.5px;top:9.3px"></i></div>
<div class="grip" style="left:1089px;top:283px;width:18px"></div>
<div class="db" style="left:1176px;top:292px"><i class="fl1"></i><i class="fl2"></i></div>
<div class="db" style="left:1190px;top:292px"><i class="x1"></i><i class="x2"></i></div>
<div class="sp" style="left:1104px;top:317px;width:90px;height:23px"><div class="btn" style="left:74px;height:21px"><i class="up" style="top:4.5px"></i><i class="dn" style="top:13.5px"></i></div></div>
<div class="sp" style="left:1104px;top:346px;width:90px;height:23px"><div class="btn" style="left:74px;height:21px"><i class="up dis" style="top:4.5px"></i><i class="dn" style="top:13.5px"></i></div></div>
<div class="sp" style="left:1104px;top:375px;width:90px;height:23px"><div class="btn" style="left:74px;height:21px"><i class="up" style="top:4.5px"></i><i class="dn" style="top:13.5px"></i></div></div>
<div class="cb" style="left:1104px;top:403px;width:90px;height:25px"><i class="arr" style="left:73.5px;top:9.3px"></i></div>
<div class="sp" style="left:1104px;top:433px;width:90px;height:23px"><div class="btn" style="left:74px;height:21px"><i class="up" style="top:4.5px"></i><i class="dn" style="top:13.5px"></i></div></div>
<div class="grip" style="left:1089px;top:468px;width:18px"></div>
<div class="db" style="left:1176px;top:476px"><i class="fl1"></i><i class="fl2"></i></div>
<div class="db" style="left:1190px;top:476px"><i class="x1"></i><i class="x2"></i></div>
<div class="cb" style="left:1065px;top:500px;width:129px;height:25px"><i class="arr" style="left:112.5px;top:9.3px"></i></div>
<div class="cb" style="left:1065px;top:529px;width:129px;height:25px"><i class="arr" style="left:112.5px;top:9.3px"></i></div>
<div class="cb" style="left:1065px;top:558px;width:129px;height:25px"><i class="arr" style="left:112.5px;top:9.3px"></i></div>
<div class="grip" style="left:1089px;top:593px;width:18px"></div>
<div class="db" style="left:1176px;top:602px"><i class="fl1"></i><i class="fl2"></i></div>
<div class="db" style="left:1190px;top:602px"><i class="x1"></i><i class="x2"></i></div>
<div class="ck" style="left:997px;top:631px"><svg width="14" height="14" style="position:absolute;left:-1px;top:-1px"><path d="M3.4 8.3L6.3 11.6L10.9 3.2" stroke="#000" stroke-width="1.9" fill="none"/></svg></div>
<div class="cb" style="left:1065px;top:626px;width:129px;height:25px"><i class="arr" style="left:112.5px;top:9.3px"></i></div>
<div class="ck" style="left:997px;top:660px"></div>
<div class="cb" style="left:1065px;top:655px;width:129px;height:25px"><i class="arr" style="left:112.5px;top:9.3px"></i></div>
<div class="ck" style="left:997px;top:689px"></div>
<div class="cb" style="left:1065px;top:684px;width:129px;height:25px"><i class="arr" style="left:112.5px;top:9.3px"></i></div>
<div style="position:absolute;left:1200px;top:736px;width:1.2px;height:1.2px;background:#a8a8a8"></div>
<div style="position:absolute;left:1200px;top:739px;width:1.2px;height:1.2px;background:#a8a8a8"></div>
<div style="position:absolute;left:1197px;top:739px;width:1.2px;height:1.2px;background:#a8a8a8"></div>
<div style="position:absolute;left:1200px;top:742px;width:1.2px;height:1.2px;background:#a8a8a8"></div>
<div style="position:absolute;left:1197px;top:742px;width:1.2px;height:1.2px;background:#a8a8a8"></div>
<div style="position:absolute;left:1194px;top:742px;width:1.2px;height:1.2px;background:#a8a8a8"></div>
<div style="position:absolute;left:1200px;top:745px;width:1.2px;height:1.2px;background:#a8a8a8"></div>
<div style="position:absolute;left:1197px;top:745px;width:1.2px;height:1.2px;background:#a8a8a8"></div>
<div style="position:absolute;left:1194px;top:745px;width:1.2px;height:1.2px;background:#a8a8a8"></div>
<div style="position:absolute;left:1191px;top:745px;width:1.2px;height:1.2px;background:#a8a8a8"></div>
<div style="position:absolute;left:985px;top:382px;width:1.2px;height:1.2px;background:#a8a8a8"></div>
<div style="position:absolute;left:985px;top:385px;width:1.2px;height:1.2px;background:#a8a8a8"></div>
<div style="position:absolute;left:985px;top:388px;width:1.2px;height:1.2px;background:#a8a8a8"></div>
<div style="position:absolute;left:985px;top:391px;width:1.2px;height:1.2px;background:#a8a8a8"></div>
<div style="position:absolute;left:985px;top:394px;width:1.2px;height:1.2px;background:#a8a8a8"></div>
<div style="position:absolute;left:985px;top:397px;width:1.2px;height:1.2px;background:#a8a8a8"></div>
<div style="position:absolute;left:982px;top:59px;width:1px;height:659px;background:#fbfbfb"></div>

<span class="t" style="left:406.30px;top:11px;font-size:14px;line-height:16px;color:#f2f2f2;letter-spacing:0.374px;font-weight:bold">OpenHantek6022 (3.1.2) - Device DSO-6022BE (FW0207)</span>
<span class="t" style="left:9.60px;top:40px;font-size:14px;line-height:16px;color:#1e1e1e;letter-spacing:0.643px"><u>F</u>ile</span>
<span class="t" style="left:48.30px;top:40px;font-size:14px;line-height:16px;color:#1e1e1e;letter-spacing:1.186px"><u>E</u>xport</span>
<span class="t" style="left:109.10px;top:40px;font-size:14px;line-height:16px;color:#1e1e1e;letter-spacing:0.673px"><u>V</u>iew</span>
<span class="t" style="left:157.30px;top:40px;font-size:14px;line-height:16px;color:#1e1e1e;letter-spacing:0.438px"><u>O</u>scilloscope</span>
<span class="t" style="left:256.00px;top:40px;font-size:14px;line-height:16px;color:#1e1e1e;letter-spacing:1.098px"><u>H</u>elp</span>
<span class="t" style="left:50.20px;top:73px;font-size:13px;line-height:15px;color:#000;letter-spacing:0.359px">TR</span>
<span class="t" style="left:74.90px;top:73px;font-size:14px;line-height:16px;color:#ffff00;letter-spacing:-1.210px">CH1</span>
<span class="t" style="left:131.90px;top:73px;font-size:14px;line-height:16px;color:#ffff00;letter-spacing:0.230px">0.000 µV</span>
<span class="t" style="left:198.30px;top:73px;font-size:14px;line-height:16px;color:#ffff00;letter-spacing:0.164px">50%</span>
<span class="t" style="left:249.90px;top:73px;font-size:14px;line-height:16px;color:#ffff00;letter-spacing:0.117px">501 µs</span>
<span class="t" style="left:309.00px;top:73px;font-size:14px;line-height:16px;color:#ffff00;letter-spacing:0.117px">499 µs</span>
<span class="t" style="left:372.10px;top:73px;font-size:14px;line-height:16px;color:#ffff00;letter-spacing:0.179px">(50%)</span>
<span class="t" style="left:446.60px;top:69px;font-size:14px;line-height:16px;color:#ffffff;letter-spacing:0.308px">10 kS on screen</span>
<span class="t" style="left:646.90px;top:69px;font-size:14px;line-height:16px;color:#ffffff;letter-spacing:0.267px">1 MS/s</span>
<span class="t" style="left:775.80px;top:69px;font-size:14px;line-height:16px;color:#ffffff;letter-spacing:0.582px">1 ms/div</span>
<span class="t" style="left:909.50px;top:69px;font-size:14px;line-height:16px;color:#ffffff;letter-spacing:0.716px">1 kHz/div</span>
<span class="t" style="left:65.20px;top:220px;font-size:14px;line-height:16px;color:#ffff00;letter-spacing:-1.360px">CH1</span>
<span class="t" style="left:67.90px;top:345px;font-size:14px;line-height:16px;color:#ff8000;letter-spacing:-1.938px">SP1</span>
<span class="t" style="left:65.00px;top:469px;font-size:14px;line-height:16px;color:#0b2cff;letter-spacing:-0.810px">CH2</span>
<span class="t" style="left:632.50px;top:613px;font-size:14px;line-height:16px;color:#ffffff;letter-spacing:0.000px">1</span>
<span class="t" style="left:649.30px;top:613px;font-size:14px;line-height:16px;color:#ffffff;letter-spacing:0.000px">2</span>
<span class="t" style="left:49.00px;top:632px;font-size:14px;line-height:16px;color:#ffffff;letter-spacing:0.607px">Markers</span>
<span class="t" style="left:111.50px;top:632px;font-size:14px;line-height:16px;color:#ffffff;letter-spacing:0.222px">Time: 1.37 ms ... 1.57 ms,  Δt: 198 µs (5.05 kHz)</span>
<span class="t" style="left:541.80px;top:632px;font-size:14px;line-height:16px;color:#ffffff;letter-spacing:0.238px">Frequency: 6.37 kHz ... 6.57 kHz,  Δf: 198 Hz</span>
<span class="t" style="left:75.00px;top:676px;font-size:14px;line-height:16px;color:#ffff00;letter-spacing:-0.860px">CH1</span>
<span class="t" style="left:75.00px;top:693px;font-size:14px;line-height:16px;color:#0b2cff;letter-spacing:-0.860px">CH2</span>
<span class="t" style="left:128.10px;top:676px;font-size:14px;line-height:16px;color:#ffff00;letter-spacing:-0.210px">DC</span>
<span class="t" style="left:128.10px;top:693px;font-size:14px;line-height:16px;color:#0b2cff;letter-spacing:-0.210px">DC</span>
<span class="t" style="left:194.60px;top:676px;font-size:14px;line-height:16px;color:#ffff00;letter-spacing:0.349px">2.00 V/div</span>
<span class="t" style="left:194.60px;top:693px;font-size:14px;line-height:16px;color:#0b2cff;letter-spacing:0.349px">2.00 V/div</span>
<span class="t" style="left:287.70px;top:676px;font-size:14px;line-height:16px;color:#ff8000;letter-spacing:0.475px">20.0 dB/div</span>
<span class="t" style="left:404.30px;top:676px;font-size:14px;line-height:16px;color:#ffffff;letter-spacing:0.349px">2.03 Vpp</span>
<span class="t" style="left:392.29px;top:693px;font-size:14px;line-height:16px;color:#ffffff;letter-spacing:0.349px">16.2 mVpp</span>
<span class="t" style="left:499.73px;top:676px;font-size:14px;line-height:16px;color:#ffffff;letter-spacing:0.349px">1.37 Vrms</span>
<span class="t" style="left:491.96px;top:693px;font-size:14px;line-height:16px;color:#ffffff;letter-spacing:0.349px">325 mVrms</span>
<span class="t" style="left:609.66px;top:676px;font-size:14px;line-height:16px;color:#ffffff;letter-spacing:0.349px">948 mV=</span>
<span class="t" style="left:609.66px;top:693px;font-size:14px;line-height:16px;color:#ffffff;letter-spacing:0.349px">325 mV=</span>
<span class="t" style="left:710.86px;top:676px;font-size:14px;line-height:16px;color:#ffffff;letter-spacing:0.349px">990 mV~</span>
<span class="t" style="left:706.62px;top:693px;font-size:14px;line-height:16px;color:#ffffff;letter-spacing:0.349px">2.30 mV~</span>
<span class="t" style="left:807.04px;top:676px;font-size:14px;line-height:16px;color:#ffffff;letter-spacing:0.349px">-0.089 dB</span>
<span class="t" style="left:815.17px;top:693px;font-size:14px;line-height:16px;color:#ffffff;letter-spacing:0.349px">-52.8 dB</span>
<span class="t" style="left:906.98px;top:676px;font-size:14px;line-height:16px;color:#ffffff;letter-spacing:0.349px">1.000 kHz</span>
<span class="t" style="left:906.98px;top:693px;font-size:14px;line-height:16px;color:#ffffff;letter-spacing:0.349px">8.130 kHz</span>
<span class="t" style="left:992.60px;top:61px;font-size:14px;line-height:16px;color:#000000;letter-spacing:0.813px">Voltage</span>
<span class="t" style="left:991.70px;top:290px;font-size:14px;line-height:16px;color:#000000;letter-spacing:0.865px">Horizontal</span>
<span class="t" style="left:992.70px;top:474px;font-size:14px;line-height:16px;color:#000000;letter-spacing:0.349px">Trigger</span>
<span class="t" style="left:992.70px;top:600px;font-size:14px;line-height:16px;color:#000000;letter-spacing:0.349px">Spectrum</span>
<span class="t" style="left:1016.10px;top:92px;font-size:14px;line-height:16px;color:#000000;letter-spacing:-0.560px">CH<u>1</u></span>
<span class="t" style="left:1015.00px;top:121px;font-size:14px;line-height:16px;color:#000000;letter-spacing:1.135px">Invert</span>
<span class="t" style="left:1016.10px;top:158px;font-size:14px;line-height:16px;color:#000000;letter-spacing:-0.560px">CH<u>2</u></span>
<span class="t" style="left:1015.00px;top:187px;font-size:14px;line-height:16px;color:#000000;letter-spacing:1.135px">Invert</span>
<span class="t" style="left:1015.10px;top:224px;font-size:14px;line-height:16px;color:#000000;letter-spacing:1.496px">MA<u>T</u>H</span>
<span class="t" style="left:1015.00px;top:253px;font-size:14px;line-height:16px;color:#000000;letter-spacing:1.135px">Invert</span>
<span class="t" style="left:997.80px;top:321px;font-size:14px;line-height:16px;color:#000000;letter-spacing:0.349px">Timebase</span>
<span class="t" style="left:997.80px;top:350px;font-size:14px;line-height:16px;color:#000000;letter-spacing:0.349px">Samplerate</span>
<span class="t" style="left:996.80px;top:379px;font-size:14px;line-height:16px;color:#000000;letter-spacing:0.349px">Frequencybase</span>
<span class="t" style="left:996.80px;top:408px;font-size:14px;line-height:16px;color:#000000;letter-spacing:0.349px">Format</span>
<span class="t" style="left:997.80px;top:437px;font-size:14px;line-height:16px;color:#000000;letter-spacing:0.701px">Calibration out</span>
<span class="t" style="left:996.80px;top:505px;font-size:14px;line-height:16px;color:#000000;letter-spacing:0.349px">Mode</span>
<span class="t" style="left:997.80px;top:534px;font-size:14px;line-height:16px;color:#000000;letter-spacing:0.349px">Source</span>
<span class="t" style="left:997.80px;top:563px;font-size:14px;line-height:16px;color:#000000;letter-spacing:0.349px">Slope</span>
<span class="t" style="left:1016.10px;top:631px;font-size:14px;line-height:16px;color:#000000;letter-spacing:0.349px"><u>S</u>P1</span>
<span class="t" style="left:1016.10px;top:660px;font-size:14px;line-height:16px;color:#000000;letter-spacing:0.349px">S<u>P</u>2</span>
<span class="t" style="left:1016.10px;top:689px;font-size:14px;line-height:16px;color:#000000;letter-spacing:0.349px">SP<u>M</u></span>
<span class="t" style="left:1073.20px;top:92px;font-size:14px;line-height:16px;color:#000000;letter-spacing:0.349px">2 V</span>
<span class="t" style="left:1073.20px;top:121px;font-size:14px;line-height:16px;color:#000000;letter-spacing:0.349px">x1</span>
<span class="t" style="left:1149.50px;top:121px;font-size:14px;line-height:16px;color:#000000;letter-spacing:0.349px">DC</span>
<span class="t" style="left:1073.20px;top:158px;font-size:14px;line-height:16px;color:#000000;letter-spacing:0.349px">2 V</span>
<span class="t" style="left:1073.20px;top:187px;font-size:14px;line-height:16px;color:#000000;letter-spacing:0.349px">x1</span>
<span class="t" style="left:1149.50px;top:187px;font-size:14px;line-height:16px;color:#000000;letter-spacing:0.349px">DC</span>
<span class="t" style="left:1073.20px;top:224px;font-size:14px;line-height:16px;color:#000000;letter-spacing:0.349px">2 V</span>
<span class="t" style="left:1073.20px;top:253px;font-size:14px;line-height:16px;color:#000000;letter-spacing:0.349px">CH1 + CH2</span>
<span class="t" style="left:1108.50px;top:321px;font-size:14px;line-height:16px;color:#000000;letter-spacing:0.349px">1 ms</span>
<span class="t" style="left:1108.50px;top:350px;font-size:14px;line-height:16px;color:#000000;letter-spacing:0.349px">1 MS/s</span>
<span class="t" style="left:1108.50px;top:379px;font-size:14px;line-height:16px;color:#000000;letter-spacing:0.349px">1 kHz</span>
<span class="t" style="left:1109.50px;top:408px;font-size:14px;line-height:16px;color:#000000;letter-spacing:0.349px">T - Y</span>
<span class="t" style="left:1108.50px;top:437px;font-size:14px;line-height:16px;color:#000000;letter-spacing:0.349px">1 kHz</span>
<span class="t" style="left:1070.50px;top:505px;font-size:14px;line-height:16px;color:#000000;letter-spacing:0.349px">Auto</span>
<span class="t" style="left:1070.50px;top:534px;font-size:14px;line-height:16px;color:#000000;letter-spacing:0.349px">CH1</span>
<span class="t" style="left:1070.50px;top:631px;font-size:14px;line-height:16px;color:#000000;letter-spacing:0.349px">20 dB</span>
<span class="t" style="left:1070.50px;top:660px;font-size:14px;line-height:16px;color:#000000;letter-spacing:0.349px">20 dB</span>
<span class="t" style="left:1070.50px;top:689px;font-size:14px;line-height:16px;color:#000000;letter-spacing:0.349px">20 dB</span>
<svg style="position:absolute;left:0;top:0" width="1203" height="748"><path d="M111.1 85.8L121.4 75.5M116.8 75.60000000000001H122.2V80.60000000000001" stroke="#ffff00" stroke-width="1.6" fill="none"/><path d="M236.3 85.6L246.0 75.89999999999999M241.4 76.0H246.79999999999998V81.0" stroke="#ffff00" stroke-width="1.6" fill="none"/><path d="M295.5 75.3L305.5 85.0M300.90000000000003 84.89999999999999H306.3V79.89999999999999" stroke="#ffff00" stroke-width="1.6" fill="none"/><path d="M354.9 85.6L364.9 75.89999999999999M360.3 76.0H365.7V81.0" stroke="#ffff00" stroke-width="1.6" fill="none"/><path d="M1072.2 576.5L1081.7 567.2M1077.8 567.3000000000001H1082.5V571.6" stroke="#000" stroke-width="1.3" fill="none"/></svg>
</body></html>
